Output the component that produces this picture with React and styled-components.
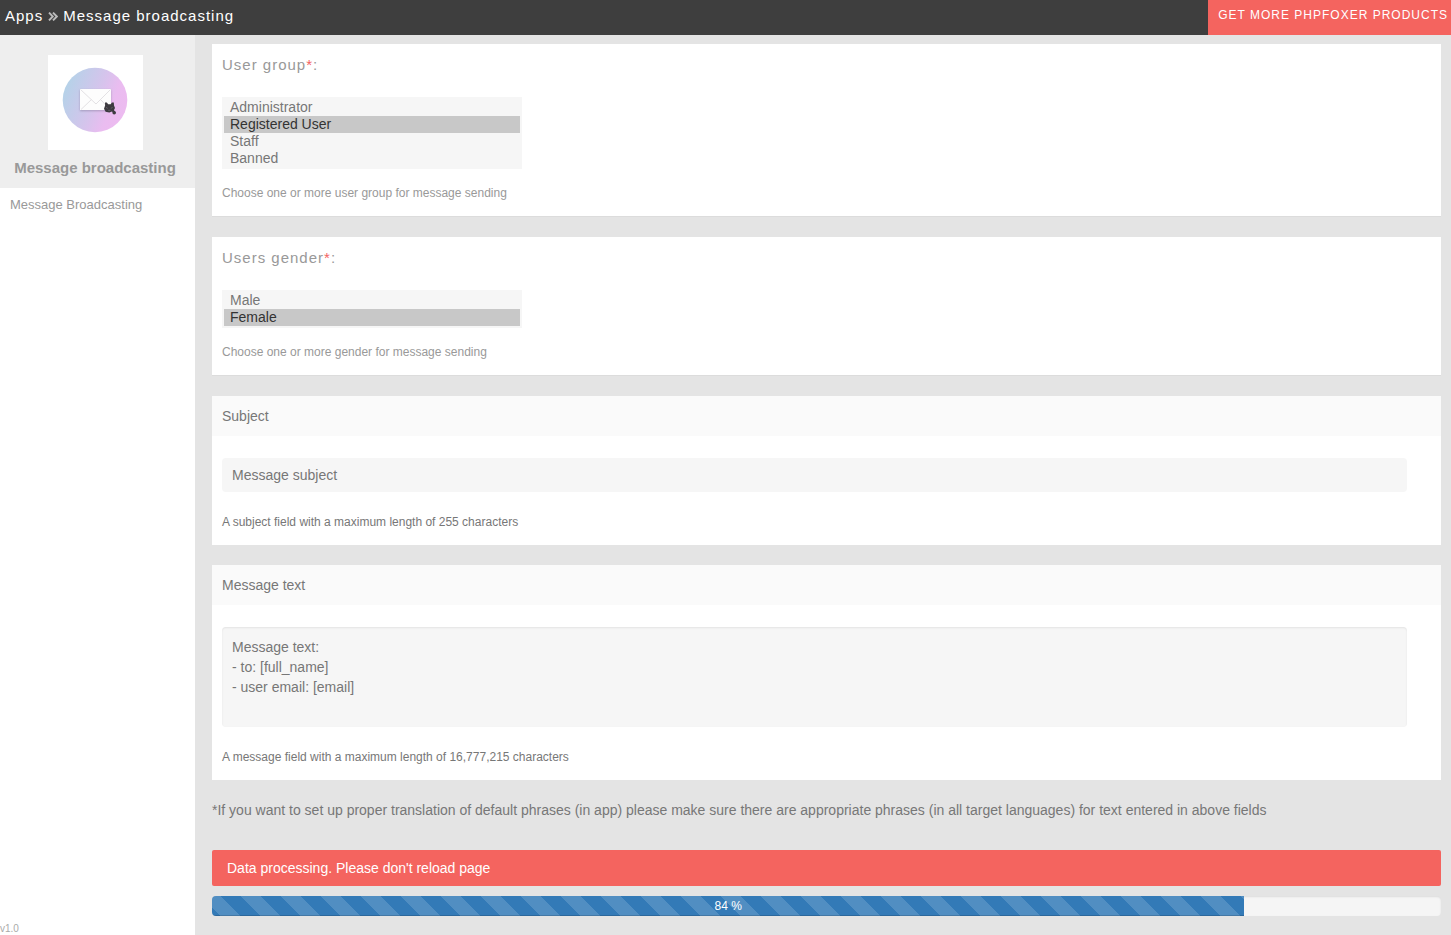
import { useState } from 'react';
import styled, { createGlobalStyle } from 'styled-components';

const GlobalStyle = createGlobalStyle`
    * {
        box-sizing: border-box;
    }
    body {
        margin: 0;
        background: #e4e4e4;
        color: #777;
        font-family: "Liberation Sans", Arial, sans-serif;
        font-size: 14px;
        line-height: 20px;
    }
`;

const Page = styled.div`
    display: flex;
    flex-direction: column;
    min-height: 100vh;
`;

const Header = styled.header`
    display: flex;
    justify-content: space-between;
    height: 35px;
    background: #3e3e3e;
`;

const Breadcrumb = styled.h1`
    display: flex;
    align-items: center;
    gap: 5px;
    margin: 0;
    padding: 0 5px 3px;
    color: #fff;
    font-size: 15px;
    font-weight: normal;
    letter-spacing: 1px;

    svg {
        width: 10px;
        height: 9px;
        color: #bbb;
    }
`;

const MoreLink = styled.a`
    padding: 5px 3px 0 10px;
    background: #f4645f;
    color: #fff;
    font-size: 12px;
    letter-spacing: 1px;
    text-decoration: none;
    text-transform: uppercase;
    white-space: nowrap;
`;

const Body = styled.div`
    display: flex;
    flex: 1;
`;

const Sidebar = styled.aside`
    display: flex;
    flex-direction: column;
    flex: 0 0 195px;
    background: #fff;
    color: #999;
`;

const AppInfo = styled.div`
    display: flex;
    flex-direction: column;
    align-items: center;
    gap: 8px;
    padding: 20px 5px 10px 0;
    background: #eee;

    svg {
        width: 95px;
        height: 95px;
        background: #fff;
    }
    h2 {
        margin: 0;
        font-size: 15px;
        line-height: 20px;
    }
`;

const NavLink = styled.a`
    padding: 7px 10px;
    color: #999;
    font-size: 13px;
    text-decoration: none;
`;

const Version = styled.span`
    margin-top: auto;
    color: #aaa;
    font-size: 10px;
    line-height: 12px;
`;

const Content = styled.main`
    flex: 1;
    min-width: 0;
    padding: 9px 10px 0 17px;
`;

const Card = styled.section`
    margin-bottom: 20px;
    padding-bottom: 14px;
    background: #fff;
    border-bottom: ${({$lined}) => $lined ? '1px solid #dcdcdc' : 'none'};
`;

const GroupLabel = styled.label`
    display: block;
    margin-bottom: 21px;
    padding: 10px 10px 0;
    color: #999;
    font-size: 15px;
    line-height: 22px;
    letter-spacing: 1px;

    span {
        color: #f4645f;
    }
`;

const PanelLabel = styled.label`
    display: block;
    margin-bottom: 22px;
    padding: 10px;
    background: #fafafa;
`;

const CardBody = styled.div`
    padding: 0 34px 0 10px;
`;

const ListBox = styled.select`
    display: block;
    width: 300px;
    padding: 2px;
    border: 0;
    border-radius: 0;
    outline: 0;
    overflow: hidden;
    background: #f6f6f6;
    color: #777;
    font: 14px "Liberation Sans", Arial, sans-serif;

    option {
        padding: 0 6px 1px;
    }
    option:checked {
        background: linear-gradient(#c8c8c8, #c8c8c8);
        color: #333;
    }
`;

const TextInput = styled.input`
    display: block;
    width: 100%;
    height: 34px;
    padding: 6px 10px;
    border: 0;
    border-radius: 4px;
    outline: 0;
    background: #f6f6f6;
    color: #777;
    font: inherit;
`;

const TextArea = styled(TextInput)`
    height: 100px;
    padding: 10px;
    resize: none;
    box-shadow: inset 0 1px 2px rgba(0, 0, 0, 0.08);
`;

const Help = styled.p`
    margin: ${({$light}) => $light ? '15px' : '21px'} 0 0;
    color: ${({$light}) => $light ? '#999' : '#777'};
    font-size: 12px;
    line-height: 18px;
`;

const Note = styled.p`
    margin: 0 0 30px;
`;

const Alert = styled.div`
    margin-bottom: 10px;
    padding: 8px 15px;
    border-radius: 2px;
    background: #f4645f;
    color: #fff;
`;

const Progress = styled.div`
    height: 20px;
    margin-bottom: 19px;
    overflow: hidden;
    border-radius: 4px;
    background: #f5f5f5;
    box-shadow: inset 0 1px 2px rgba(0, 0, 0, 0.1);
`;

const ProgressBar = styled.div`
    height: 100%;
    background-color: #337ab7;
    background-image: linear-gradient(
        45deg,
        rgba(255, 255, 255, 0.15) 25%,
        transparent 25%,
        transparent 50%,
        rgba(255, 255, 255, 0.15) 50%,
        rgba(255, 255, 255, 0.15) 75%,
        transparent 75%,
        transparent
    );
    background-position: 29px 0;
    background-size: 40px 40px;
    box-shadow: inset 0 -1px 0 rgba(0, 0, 0, 0.15);
    color: #fff;
    font-size: 12px;
    text-align: center;
`;

const DoubleAngle = () => (
    <svg viewBox="0 0 10 9" fill="none" stroke="currentColor" strokeWidth="1.9" aria-hidden="true">
        <path d="M1 0.6 4.8 4.5 1 8.4M5 0.6 8.8 4.5 5 8.4" />
    </svg>
);

const AppLogo = () => (
    <svg viewBox="0 0 95 95" aria-hidden="true">
        <defs>
            <linearGradient id="disc" x1="0" y1="0.3" x2="1" y2="0.7">
                <stop offset="0" stopColor="#b3d3e8" />
                <stop offset="0.5" stopColor="#d5c4ec" />
                <stop offset="0.75" stopColor="#eabcf0" />
                <stop offset="1" stopColor="#edbbf0" />
            </linearGradient>
            <filter id="soft" x="-20%" y="-20%" width="140%" height="150%">
                <feDropShadow dx="0" dy="1" stdDeviation="1" floodColor="#776c8c" floodOpacity="0.5" />
            </filter>
        </defs>
        <circle cx="47" cy="45" r="32.3" fill="url(#disc)" />
        <rect x="32" y="34" width="31" height="21" fill="#fdfdfd" filter="url(#soft)" />
        <path d="M32.5 34.5 48 49 62.5 34.5M33 54.5 43.5 44.5M62 54.5 52.5 44.5" fill="none" stroke="#e3e1e4" />
        <g fill="#3d3b40">
            <path d="M57 47.6 58.8 47.4 60.2 49.2H62.6L64 47.4 65.8 47.6 66 50.6 67 53 66 55 67.4 57.5 65.6 58.3 64 56.5 61.3 57.4 57.6 56.8 56 53.8 57.1 50.6Z" />
            <circle cx="66.2" cy="57.8" r="1.8" />
        </g>
        <path d="M58 52.4 59.8 53.4M64.6 52.4 62.8 53.4M60.2 55.3H62.4" fill="none" stroke="#77737c" strokeWidth="0.6" />
    </svg>
);

const groups = ['Administrator', 'Registered User', 'Staff', 'Banned'];
const genders = ['Male', 'Female'];

const SelectCard = ({ id, title, items, initial, help }) => {
    const [selected, setSelected] = useState(initial);

    return (
        <Card $lined>
            <GroupLabel htmlFor={id}>{title}<span>*</span>:</GroupLabel>
            <CardBody>
                <ListBox
                    id={id}
                    multiple
                    size={items.length}
                    value={selected}
                    onChange={(e) => setSelected(Array.from(e.target.selectedOptions, (o) => o.value))}
                >
                    {items.map((i) => <option key={i} value={i}>{i}</option>)}
                </ListBox>
                <Help $light>{help}</Help>
            </CardBody>
        </Card>
    );
};

const App = () => {
    const [subject, setSubject] = useState('Message subject');
    const [text, setText] = useState('Message text:\n- to: [full_name]\n- user email: [email]');
    const progress = 84;

    return (
        <Page>
            <GlobalStyle />
            <Header>
                <Breadcrumb>Apps <DoubleAngle /> Message broadcasting</Breadcrumb>
                <MoreLink href="#products">Get more phpFoxer products</MoreLink>
            </Header>
            <Body>
                <Sidebar>
                    <AppInfo>
                        <AppLogo />
                        <h2>Message broadcasting</h2>
                    </AppInfo>
                    <NavLink href="#broadcasting">Message Broadcasting</NavLink>
                    <Version>v1.0</Version>
                </Sidebar>
                <Content>
                    <SelectCard
                        id="group"
                        title="User group"
                        items={groups}
                        initial={['Registered User']}
                        help="Choose one or more user group for message sending"
                    />
                    <SelectCard
                        id="gender"
                        title="Users gender"
                        items={genders}
                        initial={['Female']}
                        help="Choose one or more gender for message sending"
                    />
                    <Card>
                        <PanelLabel htmlFor="subject">Subject</PanelLabel>
                        <CardBody>
                            <TextInput id="subject" type="text" value={subject} onChange={(e) => setSubject(e.target.value)} />
                            <Help>A subject field with a maximum length of 255 characters</Help>
                        </CardBody>
                    </Card>
                    <Card>
                        <PanelLabel htmlFor="text">Message text</PanelLabel>
                        <CardBody>
                            <TextArea as="textarea" id="text" value={text} onChange={(e) => setText(e.target.value)} />
                            <Help>A message field with a maximum length of 16,777,215 characters</Help>
                        </CardBody>
                    </Card>
                    <Note>
                        *If you want to set up proper translation of default phrases (in app) please make sure there are
                        appropriate phrases (in all target languages) for text entered in above fields
                    </Note>
                    <Alert role="alert">Data processing. Please don't reload page</Alert>
                    <Progress>
                        <ProgressBar
                            role="progressbar"
                            aria-label="Sending"
                            aria-valuenow={progress}
                            aria-valuemin={0}
                            aria-valuemax={100}
                            style={{ width: `${progress}%` }}
                        >
                            {progress} %
                        </ProgressBar>
                    </Progress>
                </Content>
            </Body>
        </Page>
    );
};

export default App;
